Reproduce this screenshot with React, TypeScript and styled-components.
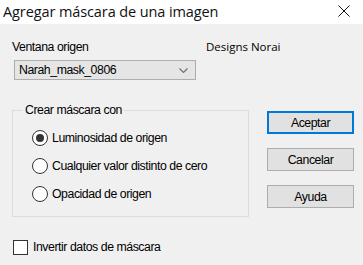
import styled, { createGlobalStyle } from "styled-components";

const GlobalStyle = createGlobalStyle`
  html, body {
    margin: 0;
    padding: 0;
    background: #f0f0f0;
  }
  * {
    box-sizing: border-box;
  }
`;

const Dialog = styled.div`
  width: 363px;
  height: 265px;
  background: #f0f0f0;
  font-family: "Liberation Sans", Arial, sans-serif;
  font-size: 12.3px;
  letter-spacing: -0.45px;
  color: #000;
  overflow: hidden;
`;

const TitleBar = styled.div`
  height: 24px;
  background: #fff;
  display: flex;
  align-items: center;
  justify-content: space-between;
  padding: 0 13px 2px 3px;
`;

const Title = styled.span`
  font-family: "Open Sans", "Noto Sans", sans-serif;
  font-size: 14.5px;
  color: #111;
  letter-spacing: -0.1px;
`;

const Body = styled.div`
  padding: 16px 0 0 12px;
`;

const TopRow = styled.div`
  display: flex;
  align-items: flex-start;
`;

const SourceColumn = styled.div`
  display: flex;
  flex-direction: column;
  gap: 5px;
  width: 184px;
`;

const Label = styled.span`
  line-height: 15px;
`;

const Select = styled.div`
  height: 20px;
  margin-left: 2px;
  border: 1px solid #adadad;
  background: #e5e5e5;
  display: flex;
  align-items: center;
  justify-content: space-between;
  padding: 0 7px 0 4px;
`;

const Credit = styled.span`
  font-family: "Open Sans", "Noto Sans", sans-serif;
  font-size: 11.5px;
  letter-spacing: 0;
  margin: -1px 0 0 10px;
`;

const MiddleRow = styled.div`
  display: flex;
  align-items: flex-start;
  margin-top: 30px;
`;

const Group = styled.fieldset`
  width: 237px;
  height: 114px;
  margin: -7px 0 0 0;
  padding: 12px 0 0 19px;
  border: 1px solid #dcdcdc;
  display: flex;
  flex-direction: column;
  gap: 12px;
`;

const Legend = styled.legend`
  padding: 0 2px;
  margin-left: -9px;
  line-height: 15px;
`;

const Option = styled.label`
  display: flex;
  align-items: center;
  gap: 4px;
  line-height: 15px;
`;

const Radio = styled.span<{ $checked?: boolean }>`
  width: 16px;
  height: 16px;
  border-radius: 50%;
  border: 1px solid #333;
  background: #fff;
  display: flex;
  align-items: center;
  justify-content: center;
  &::after {
    content: "";
    width: 8px;
    height: 8px;
    border-radius: 50%;
    background: ${(p) => (p.$checked ? "#333" : "transparent")};
  }
`;

const Buttons = styled.div`
  display: flex;
  flex-direction: column;
  gap: 14px;
  margin: 1px 0 0 18px;
`;

const Button = styled.button<{ $default?: boolean }>`
  width: 87px;
  height: 23px;
  padding: 0;
  font-family: inherit;
  font-size: 12.3px;
  letter-spacing: -0.45px;
  color: #000;
  background: #e1e1e1;
  border: ${(p) => (p.$default ? "2px solid #0078d7" : "1px solid #adadad")};
`;

const CheckRow = styled.label`
  display: flex;
  align-items: center;
  gap: 5px;
  margin: 23px 0 0 1px;
  line-height: 15px;
`;

const Checkbox = styled.span`
  width: 15px;
  height: 15px;
  border: 1px solid #333;
  background: #fff;
`;

const Chevron = () => (
  <svg width="9" height="5" viewBox="0 0 9 5">
    <path d="M0.5 0.5 L4.5 4.5 L8.5 0.5" fill="none" stroke="#6d6d6d" strokeWidth="1.1" />
  </svg>
);

const CloseIcon = () => (
  <svg width="12" height="12" viewBox="0 0 12 12">
    <path d="M0.5 0.5 L11.5 11.5 M11.5 0.5 L0.5 11.5" stroke="#111" strokeWidth="1" />
  </svg>
);

export default function App() {
  return (
    <Dialog>
      <GlobalStyle />
      <TitleBar>
        <Title>Agregar máscara de una imagen</Title>
        <CloseIcon />
      </TitleBar>
      <Body>
        <TopRow>
          <SourceColumn>
            <Label>Ventana origen</Label>
            <Select>
              <span>Narah_mask_0806</span>
              <Chevron />
            </Select>
          </SourceColumn>
          <Credit>Designs Norai</Credit>
        </TopRow>
        <MiddleRow>
          <Group>
            <Legend>Crear máscara con</Legend>
            <Option>
              <Radio $checked />
              Luminosidad de origen
            </Option>
            <Option>
              <Radio />
              Cualquier valor distinto de cero
            </Option>
            <Option>
              <Radio />
              Opacidad de origen
            </Option>
          </Group>
          <Buttons>
            <Button $default>Aceptar</Button>
            <Button>Cancelar</Button>
            <Button>Ayuda</Button>
          </Buttons>
        </MiddleRow>
        <CheckRow>
          <Checkbox />
          Invertir datos de máscara
        </CheckRow>
      </Body>
    </Dialog>
  );
}
